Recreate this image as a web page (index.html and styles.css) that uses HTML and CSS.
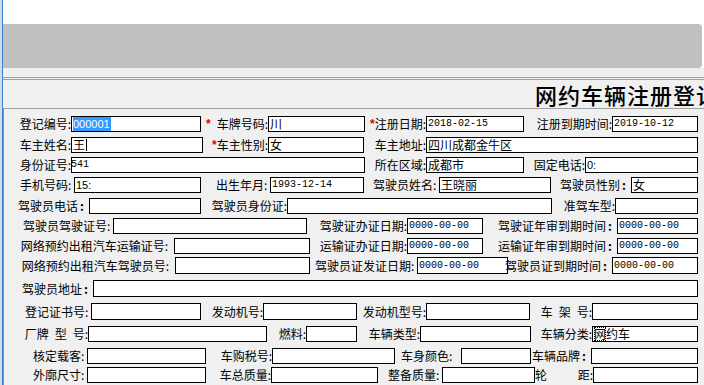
FILE: index.html
```html
<!doctype html>
<html lang="zh-CN">
<head>
    <meta charset="UTF-8">
    <meta name="viewport" content="width=device-width, initial-scale=1.0">
    <title>网约车辆注册登记</title>
    <link rel="stylesheet" href="styles.css">
</head>
<body>
<div class="screen">
    <div class="edge"></div>
    <div class="app">
        <div class="blank"></div>
        <div class="toolbar"></div>
        <div class="spacer"></div>
        <div class="titlebar"><h1>网约车辆注册登记</h1></div>

        <!-- 车辆 / 车主 / 驾驶员 信息 -->
        <form class="form">
            <div class="row r1">
                <label class="lbl">登记编号:</label><span class="box"><span class="sel">000001</span></span>
                <label class="lbl"><i class="req">*</i>&ensp;车牌号码:</label><span class="box">川</span>
                <label class="lbl"><i class="req">*</i>注册日期:</label><span class="box num">2018-02-15</span>
                <label class="lbl">注册到期时间:</label><span class="box num">2019-10-12</span>
            </div>
            <div class="row r2 m5">
                <label class="lbl">车主姓名:</label><span class="box">王<span class="caret"></span></span>
                <label class="lbl"><i class="req">*</i>车主性别:</label><span class="box">女</span>
                <label class="lbl">车主地址:</label><span class="box">四川成都金牛区</span>
            </div>
            <div class="row r3">
                <label class="lbl">身份证号:</label><span class="box num clip">541</span>
                <label class="lbl">所在区域:</label><span class="box">成都市</span>
                <label class="lbl">固定电话:</label><span class="box ss">0:</span>
            </div>
            <div class="row r4">
                <label class="lbl">手机号码:&nbsp;</label><span class="box ss">15:</span>
                <label class="lbl">出生年月:&nbsp;</label><span class="box num">1993-12-14</span>
                <label class="lbl">驾驶员姓名:&nbsp;</label><span class="box">王晓丽</span>
                <label class="lbl">驾驶员性别<b class="bc">:</b></label><span class="box">女</span>
            </div>
            <div class="row r5 m5">
                <label class="lbl">驾驶员电话<b class="bc">:</b></label><span class="box"></span>
                <label class="lbl">驾驶员身份证:</label><span class="box"></span>
                <label class="lbl">准驾车型:</label><span class="box"></span>
            </div>
            <div class="row r6">
                <label class="lbl">驾驶员驾驶证号:&nbsp;</label><span class="box"></span>
                <label class="lbl">驾驶证办证日期:</label><span class="box num">0000-00-00</span>
                <label class="lbl">驾驶证年审到期时间<b class="bc">:</b></label><span class="box num">0000-00-00</span>
            </div>
            <div class="row r7">
                <label class="lbl">网络预约出租汽车运输证号:&ensp;</label><span class="box"></span>
                <label class="lbl">运输证办证日期:</label><span class="box num">0000-00-00</span>
                <label class="lbl">运输证年审到期时间<b class="bc">:</b></label><span class="box num">0000-00-00</span>
            </div>
            <div class="row r8 m3 h17">
                <label class="lbl">网络预约出租汽车驾驶员号:&ensp;</label><span class="box"></span>
                <label class="lbl">驾驶员证发证日期:&nbsp;</label><span class="box num">0000-00-00</span>
                <label class="lbl">驾驶员证到期时间<b class="bc">:</b></label><span class="box num">0000-00-00</span>
            </div>
            <div class="row r9 m6 h17">
                <label class="lbl">驾驶员地址<b class="bc">:</b></label><span class="box"></span>
            </div>
            <div class="row r10 m6 h17">
                <label class="lbl">登记证书号:&nbsp;</label><span class="box"></span>
                <label class="lbl">发动机号:</label><span class="box"></span>
                <label class="lbl">发动机型号:</label><span class="box"></span>
                <label class="lbl">车&ensp;架&ensp;号:</label><span class="box"></span>
            </div>
            <div class="row r11 m6">
                <label class="lbl">厂牌&ensp;型&ensp;号:</label><span class="box"></span>
                <label class="lbl">燃料:</label><span class="box"></span>
                <label class="lbl">车辆类型:</label><span class="box"></span>
                <label class="lbl">车辆分类:</label><span class="box"><span class="focus">网</span>约车</span>
            </div>
            <div class="row r12 m6">
                <label class="lbl">核定载客:&nbsp;</label><span class="box"></span>
                <label class="lbl">车购税号:</label><span class="box"></span>
                <label class="lbl">车身颜色:&ensp;&nbsp;</label><span class="box"></span>
                <label class="lbl">车辆品牌<b class="bc">:</b></label><span class="box"></span>
            </div>
            <div class="row r13 m3">
                <label class="lbl">外廓尺寸:&nbsp;</label><span class="box"></span>
                <label class="lbl">车总质量:</label><span class="box"></span>
                <label class="lbl">整备质量:&nbsp;</label><span class="box"></span>
                <label class="lbl spread"><span>轮</span><span>距:</span></label><span class="box"></span>
            </div>
        </form>
    </div>
</div>
</body>
</html>
```

FILE: styles.css
```css
* {
    box-sizing: border-box;
}

body {
    margin: 0;
    background: #fff;
    color: #000;
    font-family: "Noto Sans CJK SC", sans-serif;
    font-size: 12px;
    overflow: hidden;
}

.screen {
    display: flex;
    height: 385px;
}

.edge {
    width: 3px;
    background: #d3dae2;
    border-right: 1px solid #3b7fd0;
}

.app {
    flex: 1;
    min-width: 0;
    display: flex;
    flex-direction: column;
}

.blank {
    height: 24px;
}

.toolbar {
    height: 44px;
    margin-right: 2px;
    background: #c0c0c0;
    border-radius: 0 4px 4px 0;
}

.spacer {
    height: 9px;
    background: #f0f0f0;
}

.titlebar {
    height: 32px;
    background: #f0f0f0;
    border-top: 3px double #a0a0a0;
    border-bottom: 1px solid #a0a0a0;
    overflow: hidden;
    white-space: nowrap;
}

.titlebar h1 {
    margin: 0;
    padding-left: 532px;
    font-size: 22px;
    font-weight: 500;
    line-height: 28px;
    letter-spacing: 1px;
}

/* form area */
.form {
    flex: 1;
    margin: 0;
    padding-top: 7px;
    background: #f0f0f0;
    border-left: 1px solid #8a8a8a;
}

.row {
    display: grid;
    height: 16px;
    margin-top: 4px;
}

.row:first-child {
    margin-top: 0;
}

.m3 { margin-top: 3px; }
.m5 { margin-top: 5px; }
.m6 { margin-top: 6px; }
.h17 { height: 17px; }

.r1 { grid-template-columns: 67px 130px 67px 97px 61px 98px 88px 86px; }
.r2 { grid-template-columns: 67px 132px 65px 96px 62px 272px; }
.r3 { grid-template-columns: 67px 294px 61px 98px 61px 113px; }
.r4 { grid-template-columns: 70px 127px 69px 94px 75px 112px 80px 67px; }
.r5 { grid-template-columns: 85px 112px 86px 265px 63px 83px; }
.r6 { grid-template-columns: 109px 194px 100px 76px 134px 81px; }
.r7 { grid-template-columns: 170px 136px 97px 76px 134px 81px; }
.r8 { grid-template-columns: 171px 135px 107px 91px 104px 86px; }
.r9 { grid-template-columns: 89px 605px; }
.r10 { grid-template-columns: 87px 110px 62px 94px 69px 104px 62px 106px; }
.r11 { grid-template-columns: 84px 179px 39px 51px 63px 111px 61px 106px; }
.r12 { grid-template-columns: 83px 119px 66px 123px 66px 70px 60px 107px; }
.r13 { grid-template-columns: 83px 119px 65px 107px 64px 93px 58px 105px; }

.lbl {
    display: flex;
    align-items: center;
    justify-content: flex-end;
    white-space: nowrap;
    line-height: 16px;
}

.lbl.spread {
    justify-content: space-between;
}

.req {
    color: #e00000;
    font-family: "Liberation Sans", sans-serif;
    font-style: normal;
    font-weight: bold;
    font-size: 12px;
}

.bc {
    font-weight: bold;
    padding: 0 5px 0 2px;
}

.box {
    display: flex;
    align-items: center;
    height: 100%;
    border: 1px solid #000;
    background: #fff;
    padding-left: 1px;
    line-height: 14px;
    white-space: nowrap;
    overflow: hidden;
}

.num {
    font-family: "Liberation Mono", monospace;
    font-size: 10px;
}

.clip {
    padding-left: 0;
    text-indent: -1px;
}

.ss {
    font-family: "Liberation Sans", sans-serif;
    font-size: 11px;
}

.sel {
    display: flex;
    align-items: center;
    height: 100%;
    padding-right: 1px;
    background: #3399ff;
    color: #fff;
    font-family: "Liberation Sans", sans-serif;
    font-size: 11px;
}

.caret {
    width: 1px;
    height: 12px;
    margin-left: 1px;
    background: #000;
}

.focus {
    outline: 1px dotted #000;
    outline-offset: -1px;
}
```
